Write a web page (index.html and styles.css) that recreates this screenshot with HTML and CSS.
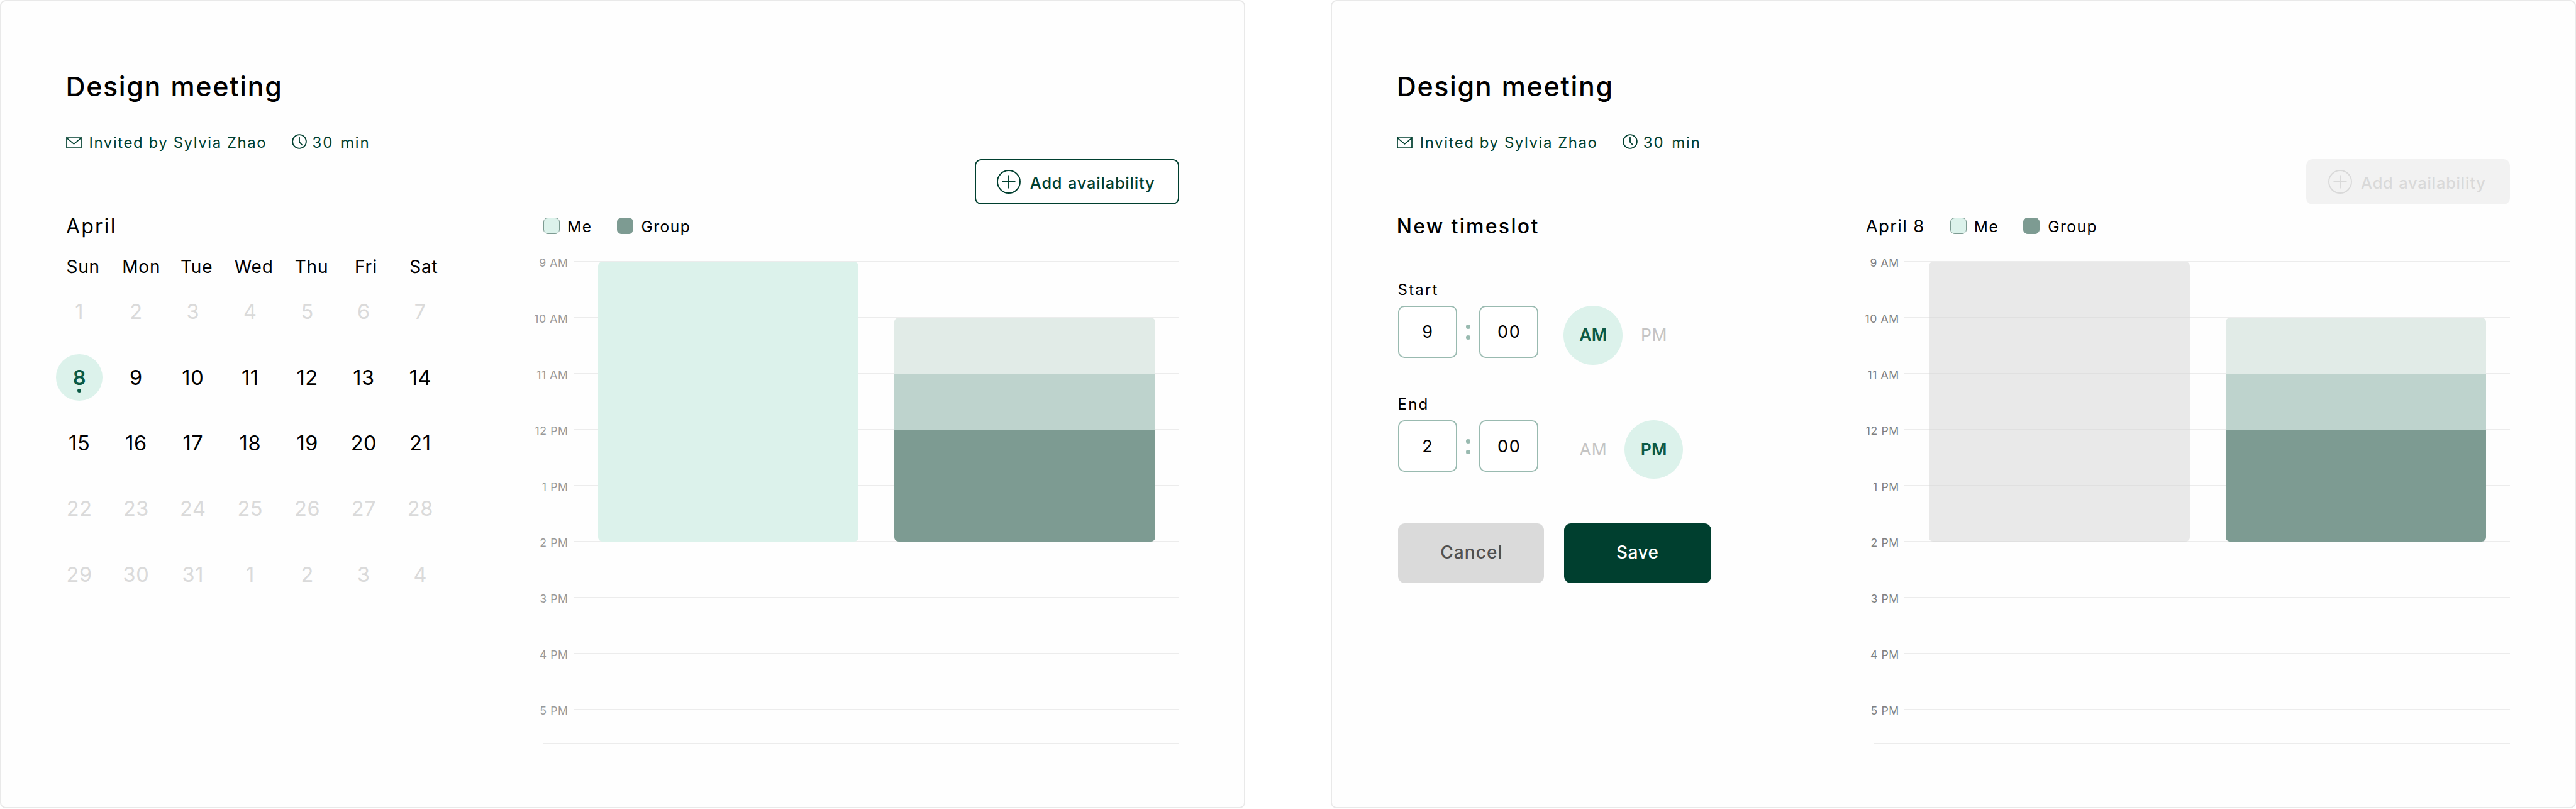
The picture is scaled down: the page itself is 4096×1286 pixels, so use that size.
FILE: index.html
```html
<!DOCTYPE html>
<html lang="en">
<head>
<meta charset="utf-8">
<title>Design meeting</title>
<link rel="stylesheet" href="styles.css">
</head>
<body>
<svg class="defs" aria-hidden="true">
  <symbol id="mail" viewBox="0 0 25 19"><path d="M1 1h23v17H1zM1.4 2.6 12.5 11.8 23.6 2.6" fill="none" stroke="currentColor" stroke-width="1.7" stroke-linejoin="round"/></symbol>
  <symbol id="clock" viewBox="0 0 24 24"><circle cx="12" cy="12" r="10.9" fill="none" stroke="currentColor" stroke-width="1.8"/><path d="M12 5.6v7.2l4.3 4.6" fill="none" stroke="currentColor" stroke-width="1.8" stroke-linecap="round" stroke-linejoin="round"/></symbol>
  <symbol id="plus" viewBox="0 0 38 38"><circle cx="19" cy="19" r="18" fill="none" stroke="currentColor" stroke-width="1.9"/><path d="M19 9.2v19.6M9.2 19h19.6" fill="none" stroke="currentColor" stroke-width="1.9" stroke-linecap="round"/></symbol>
</svg>
<main class="board">
  <section class="panel">
    <div class="side">
      <h1 class="title">Design meeting</h1>
      <div class="meta">
        <svg class="mail"><use href="#mail"/></svg><span class="from">Invited by Sylvia Zhao</span>
        <svg class="clock"><use href="#clock"/></svg><span class="length">30 min</span>
      </div>
      <h2 class="heading">April</h2>
      <div class="weekdays"><span>Sun</span><span>Mon</span><span>Tue</span><span>Wed</span><span>Thu</span><span>Fri</span><span>Sat</span></div>
      <div class="dates">
        <span class="off">1</span><span class="off">2</span><span class="off">3</span><span class="off">4</span><span class="off">5</span><span class="off">6</span><span class="off">7</span>
        <span class="picked">8</span><span>9</span><span>10</span><span>11</span><span>12</span><span>13</span><span>14</span>
        <span>15</span><span>16</span><span>17</span><span>18</span><span>19</span><span>20</span><span>21</span>
        <span class="off">22</span><span class="off">23</span><span class="off">24</span><span class="off">25</span><span class="off">26</span><span class="off">27</span><span class="off">28</span>
        <span class="off">29</span><span class="off">30</span><span class="off">31</span><span class="off">1</span><span class="off">2</span><span class="off">3</span><span class="off">4</span>
      </div>
    </div>
    <div class="chart">
      <button class="add"><svg class="plus"><use href="#plus"/></svg><span>Add availability</span></button>
      <div class="legend">
        <span class="key me"><i></i>Me</span><span class="key group"><i></i>Group</span>
      </div>
      <div class="plot">
        <div class="hour"><span>9 AM</span><hr></div>
        <div class="hour"><span>10 AM</span><hr></div>
        <div class="hour"><span>11 AM</span><hr></div>
        <div class="hour"><span>12 PM</span><hr></div>
        <div class="hour"><span>1 PM</span><hr></div>
        <div class="hour"><span>2 PM</span><hr></div>
        <div class="hour"><span>3 PM</span><hr></div>
        <div class="hour"><span>4 PM</span><hr></div>
        <div class="hour last"><span>5 PM</span><hr></div>
        <hr class="end-line">
        <div class="bars">
          <div class="bar mine"></div>
          <div class="bar team"><i class="few"></i><i class="some"></i><i class="all"></i></div>
        </div>
      </div>
    </div>
  </section>

  <section class="panel editing">
    <div class="side">
      <h1 class="title">Design meeting</h1>
      <div class="meta">
        <svg class="mail"><use href="#mail"/></svg><span class="from">Invited by Sylvia Zhao</span>
        <svg class="clock"><use href="#clock"/></svg><span class="length">30 min</span>
      </div>
      <h2 class="heading strong">New timeslot</h2>
      <div class="form">
        <div class="label">Start</div>
        <div class="time">
          <span class="box">9</span><span class="colon"><i></i><i></i></span><span class="box">00</span>
          <span class="half on am">AM</span><span class="half">PM</span>
        </div>
        <div class="label second">End</div>
        <div class="time">
          <span class="box">2</span><span class="colon"><i></i><i></i></span><span class="box">00</span>
          <span class="half am">AM</span><span class="half on">PM</span>
        </div>
        <div class="actions"><button class="cancel">Cancel</button><button class="save">Save</button></div>
      </div>
    </div>
    <div class="chart">
      <button class="add" disabled><svg class="plus"><use href="#plus"/></svg><span>Add availability</span></button>
      <div class="legend">
        <span class="day">April 8</span><span class="key me"><i></i>Me</span><span class="key group"><i></i>Group</span>
      </div>
      <div class="plot">
        <div class="hour"><span>9 AM</span><hr></div>
        <div class="hour"><span>10 AM</span><hr></div>
        <div class="hour"><span>11 AM</span><hr></div>
        <div class="hour"><span>12 PM</span><hr></div>
        <div class="hour"><span>1 PM</span><hr></div>
        <div class="hour"><span>2 PM</span><hr></div>
        <div class="hour"><span>3 PM</span><hr></div>
        <div class="hour"><span>4 PM</span><hr></div>
        <div class="hour last"><span>5 PM</span><hr></div>
        <hr class="end-line">
        <div class="bars">
          <div class="bar mine"></div>
          <div class="bar team"><i class="few"></i><i class="some"></i><i class="all"></i></div>
        </div>
      </div>
    </div>
  </section>
</main>
</body>
</html>
```
FILE: styles.css
```css
* { box-sizing: border-box; }
body { margin: 0; background: #fff; color: #000; font-family: Inter, sans-serif; }
h1, h2 { margin: 0; }
hr { margin: 0; border: 0; height: 2px; background: #ececec; }
button { border: 0; padding: 0; font-family: inherit; font-weight: 500; }
svg { flex: none; }
.defs { display: none; }

.board { display: flex; gap: 136.5px; width: 4096px; height: 1286px; }
.panel { display: flex; width: 1979.75px; height: 1285px; border: 2px solid #e9e9e9; border-radius: 9px; background: #fefefe; }
.side { width: 840px; padding-top: 110.3px; }

.title { padding-left: 102.5px; font-size: 43px; font-weight: 500; line-height: 50px; letter-spacing: 1.6px; word-spacing: 1.6px; }
.meta { display: flex; align-items: center; height: 30px; margin: 49.3px 0 0 102.5px; color: #003f2f; font-size: 24px; line-height: 30px; }
.mail { width: 25px; height: 19px; margin-right: 12px; }
.clock { width: 24px; height: 24px; margin: -3px 9px 0 0; }
.from { width: 322px; letter-spacing: 1.55px; }
.length { letter-spacing: 1.9px; word-spacing: 3px; }

.heading { padding-left: 103px; margin-top: 98.9px; font-size: 32px; font-weight: 400; line-height: 40px; letter-spacing: 2.2px; }
.heading.strong { padding-left: 102.5px; font-weight: 500; letter-spacing: 2.3px; }

.weekdays { display: grid; grid-template-columns: 90px 95.2px 80.6px 101.4px 82.4px 90.6px 93.2px; margin: 28.4px 0 0 85.2px; font-size: 28px; line-height: 30px; letter-spacing: .8px; text-align: center; }
.dates { display: grid; grid-template-columns: 90.4px 90.2px 90.5px 91.5px 90.2px 89.4px 90.4px; grid-auto-rows: 104.35px; margin: 4.7px 0 0 79px; font-size: 32.5px; letter-spacing: .6px; place-items: center; }
.off { color: #dadada; }
.picked { position: relative; display: grid; place-items: center; width: 73.5px; height: 73.5px; border-radius: 50%; background: #dcf2eb; color: #0b5a45; font-weight: 600; letter-spacing: 0; }
.picked::after { content: ""; position: absolute; left: 33.7px; top: 54.7px; width: 6px; height: 6px; border-radius: 50%; background: #0b5a45; }

.chart { width: 1033.1px; padding-top: 250.5px; }
.add { display: flex; align-items: center; width: 324.3px; height: 72px; margin-left: auto; margin-right: .5px; padding-left: 33px; border: 2px solid #003f2f; border-radius: 10px; background: #fff; color: #003f2f; font-size: 25.3px; letter-spacing: .85px; word-spacing: 1px; }
.add:disabled { border-color: #f2f2f2; background: #f2f2f2; color: #d9d9d9; }
.add span { padding: 4px 0 0 14.5px; white-space: nowrap; }
.plus { width: 38px; height: 38px; }

.legend { display: flex; align-items: center; height: 30px; margin: 19.6px 0 0 22px; font-size: 24.5px; letter-spacing: 1.5px; }
.editing .legend { margin-left: 8.5px; }
.day { width: 134px; font-size: 27.5px; letter-spacing: 1.3px; }
.key { display: flex; align-items: center; line-height: 30px; padding-top: 1px; }
.key.me { width: 116.5px; }
.key i { width: 26px; height: 26px; margin: -1px 12px 0 0; border: 1px solid #7d9b92; border-radius: 7px; background: #dcf2eb; }
.key.group i { margin-right: 13px; background: #7d9b92; }

.plot { position: relative; margin-top: 32.2px; }
.hour { display: flex; align-items: center; gap: 8.4px; height: 20px; margin-bottom: 69.03px; color: #999; font-size: 17.6px; letter-spacing: .6px; }
.editing .hour { color: #808080; }
.hour span { width: 61.5px; padding-top: 2px; text-align: right; white-space: nowrap; }
.hour hr { flex: 1; }
.hour.last { margin-bottom: 42.7px; }
.end-line { margin-left: 21.4px; }
.bars { position: absolute; left: 108.5px; top: 9.6px; display: flex; gap: 56.9px; height: 445.6px; }
.bar { width: 414.9px; border-radius: 7px; overflow: hidden; }
.mine { background: #dcf2eb; }
.editing .mine { background: rgba(213, 213, 213, .53); }
.team { display: flex; flex-direction: column; margin-top: 89.2px; }
.few, .some { height: 89px; }
.few { background: #e1ebe7; }
.some { background: #bed3cd; }
.all { flex: 1; background: #7d9b92; }

.form { padding-left: 104.3px; }
.label { margin-top: 65.5px; font-size: 24px; line-height: 30px; letter-spacing: 2.2px; }
.label.second { margin-top: 48.1px; }
.time { display: flex; height: 93.4px; margin-top: 10.2px; }
.box { display: grid; place-items: center; width: 94px; height: 82.5px; border: 2.4px solid #99bab0; border-radius: 10px; background: #fff; font-size: 27px; letter-spacing: 1.8px; text-indent: 1.8px; }
.colon { display: flex; flex-direction: column; align-items: center; justify-content: center; gap: 10.5px; width: 35.4px; height: 84px; }
.colon i { width: 6.6px; height: 6.6px; border-radius: 50%; background: #99bab0; }
.half { display: grid; place-items: center; width: 93.4px; height: 93.4px; margin-left: 3.2px; padding-bottom: 1px; border-radius: 50%; color: #c4c4c4; font-size: 26.5px; letter-spacing: .8px; text-indent: .8px; }
.half.am { margin-left: 40.5px; }
.half.on { background: #dcf2eb; color: #0b5a45; font-weight: 600; letter-spacing: .2px; text-indent: .2px; }
.actions { display: flex; gap: 31.2px; margin-top: 70.3px; }
.actions button { width: 232.8px; height: 95.8px; padding-bottom: 3px; border-radius: 11px; font-size: 28px; }
.actions .cancel { background: #dadada; color: #505050; letter-spacing: 1.1px; text-indent: 2px; }
.actions .save { width: 234.5px; background: #003f2f; color: #fff; letter-spacing: .5px; }
```
